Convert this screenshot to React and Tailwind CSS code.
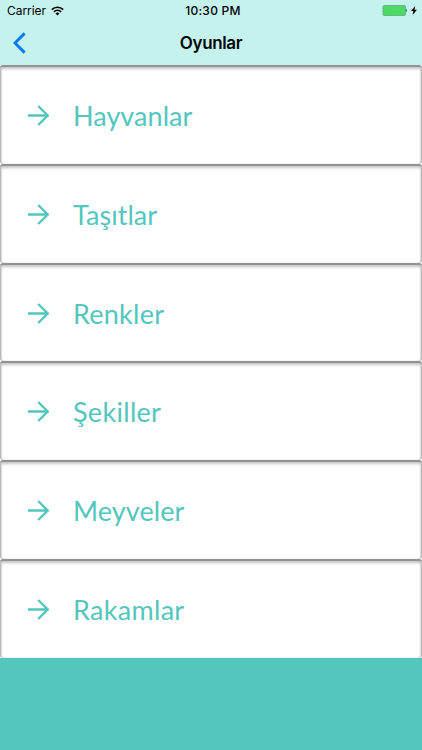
const games = [
  { name: "Hayvanlar", tracking: "tracking-[0.05px]" },
  { name: "Taşıtlar", tracking: "tracking-[0.05px]" },
  { name: "Renkler", tracking: "tracking-[0.25px]" },
  { name: "Şekiller", tracking: "tracking-[0.3px]" },
  { name: "Meyveler", tracking: "tracking-[0.1px]" },
  { name: "Rakamlar", tracking: "tracking-[0.3px]" },
];

export default function App() {
  return (
    <div className="flex h-[750px] w-[422px] flex-col overflow-hidden bg-[#53c6bd] font-['Inter',sans-serif]">
      <header className="h-[65px] shrink-0 bg-[#c6f2ed] text-black">
        <StatusBar />
        <div className="grid h-[42px] grid-cols-[1fr_auto_1fr] items-center">
          <button className="pl-[13px]" aria-label="Geri">
            <BackIcon />
          </button>
          <h1 className="text-[17px] leading-5 font-semibold tracking-[-0.35px]">
            Oyunlar
          </h1>
        </div>
      </header>

      <main className="flex h-[593px] shrink-0 flex-col bg-white">
        {games.map((game) => (
          <GameRow key={game.name} tracking={game.tracking}>
            {game.name}
          </GameRow>
        ))}
      </main>
    </div>
  );
}

function StatusBar() {
  return (
    <div className="grid h-[22px] grid-cols-3 items-center text-[12px] leading-none">
      <div className="flex items-center gap-[5px] pl-[7px]">
        <span className="tracking-[-0.05px]">Carrier</span>
        <WifiIcon />
      </div>
      <span className="pl-1 text-center font-medium tracking-[0.25px]">
        10:30 PM
      </span>
      <div className="flex items-center justify-end gap-1 pr-[5px]">
        <BatteryIcon />
        <BoltIcon />
      </div>
    </div>
  );
}

function GameRow({ children, tracking }) {
  return (
    <button className="flex flex-1 items-center rounded-[3px] border-t-2 border-t-[#939393] bg-white pt-px pl-[27px] text-left text-[#53c6bd] shadow-[inset_0_2px_3px_#c4c4c4,inset_2px_0_2px_-1px_#999,inset_-2px_0_2px_-1px_#999]">
      <ArrowIcon />
      <span
        className={`ml-6 font-['Lato',sans-serif] text-[27px] leading-8 ${tracking}`}
      >
        {children}
      </span>
    </button>
  );
}

function ArrowIcon() {
  return (
    <svg width="22" height="22" viewBox="0 0 22 22" fill="none" stroke="currentColor" strokeWidth="2.4">
      <path d="M1 10.5H20M11.2 1L20.7 10.5L11.2 20" />
    </svg>
  );
}

function BackIcon() {
  return (
    <svg width="13" height="22" viewBox="0 0 13 22" fill="none" stroke="#0b7bf5" strokeWidth="2.9">
      <path d="M11.6 1.4L2 11L11.6 20.6" />
    </svg>
  );
}

function WifiIcon() {
  return (
    <svg className="-mt-px" width="13" height="10" viewBox="0 0 13 10" fill="none" stroke="black" strokeWidth="1.6">
      <path d="M0.8 3.6C4 0.4 9 0.4 12.2 3.6" />
      <path d="M2.9 5.8C5 3.8 8 3.8 10.1 5.8" />
      <path d="M4.5 7.4C5.7 6.3 7.3 6.3 8.5 7.4L6.5 9.5Z" fill="black" stroke="none" />
    </svg>
  );
}

function BatteryIcon() {
  return (
    <svg className="-mt-px" width="25" height="11" viewBox="0 0 25 11">
      <rect x="1" y="0.5" width="22.5" height="10" rx="1.3" fill="#4cd964" stroke="#62a783" strokeWidth="0.8" />
      <path d="M23.9 3.8C25.3 4.2 25.3 6.8 23.9 7.2Z" fill="#40665c" />
    </svg>
  );
}

function BoltIcon() {
  return (
    <svg className="-mt-px" width="6" height="9" viewBox="0 0 6 9">
      <path d="M4.2 0L0 5H2.4L1.6 9L6 3.7H3.5Z" fill="black" />
    </svg>
  );
}
